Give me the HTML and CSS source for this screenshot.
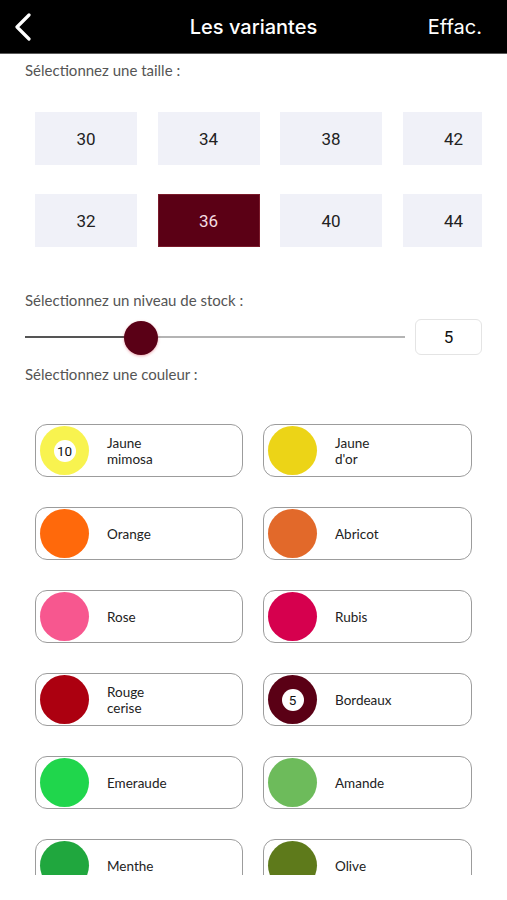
FILE: index.html
```html
<!DOCTYPE html>
<html lang="fr">
<head>
<meta charset="utf-8">
<title>Les variantes</title>
<link rel="stylesheet" href="styles.css">
</head>
<body>
<header class="topbar">
  <button class="back" aria-label="Retour">
    <svg width="20" height="28" viewBox="0 0 20 28"><polyline points="15,2 3,14 15,26" fill="none" stroke="#fff" stroke-width="3.2" stroke-linecap="round" stroke-linejoin="round"/></svg>
  </button>
  <h1 class="title">Les variantes</h1>
  <span class="clear">Effac.</span>
</header>
<main class="content">
  <p class="label label-size">Sélectionnez une taille :</p>
  <div class="sizes-wrap">
    <div class="sizes">
      <div class="size">30</div>
      <div class="size">34</div>
      <div class="size">38</div>
      <div class="size">42</div>
      <div class="size">32</div>
      <div class="size size-on">36</div>
      <div class="size">40</div>
      <div class="size">44</div>
    </div>
  </div>
  <p class="label label-stock">Sélectionnez un niveau de stock :</p>
  <div class="slider-row">
    <div class="slider">
      <div class="track-fill" style="width:116px"></div>
      <div class="thumb" style="left:99px"></div>
    </div>
    <div class="stock-input">5</div>
  </div>
  <p class="label label-color">Sélectionnez une couleur :</p>
  <div class="colors-wrap">
    <div class="colors">
      <div class="color"><span class="dot ring" style="background:#f8f34f"><span class="badge">10</span></span><span class="name">Jaune<br>mimosa</span></div>
      <div class="color"><span class="dot" style="background:#ecd417"></span><span class="name">Jaune<br>d'or</span></div>
      <div class="color"><span class="dot" style="background:#ff690b"></span><span class="name">Orange</span></div>
      <div class="color"><span class="dot" style="background:#e2692a"></span><span class="name">Abricot</span></div>
      <div class="color"><span class="dot" style="background:#f7578f"></span><span class="name">Rose</span></div>
      <div class="color"><span class="dot" style="background:#d6004e"></span><span class="name">Rubis</span></div>
      <div class="color"><span class="dot" style="background:#ac0010"></span><span class="name">Rouge<br>cerise</span></div>
      <div class="color"><span class="dot ring" style="background:#5a0015"><span class="badge">5</span></span><span class="name">Bordeaux</span></div>
      <div class="color"><span class="dot" style="background:#20d64c"></span><span class="name">Emeraude</span></div>
      <div class="color"><span class="dot" style="background:#6dbb5b"></span><span class="name">Amande</span></div>
      <div class="color"><span class="dot" style="background:#20a73e"></span><span class="name">Menthe</span></div>
      <div class="color"><span class="dot" style="background:#5e7a1b"></span><span class="name">Olive</span></div>
    </div>
  </div>
</main>
</body>
</html>
```
FILE: styles.css
```css
* { box-sizing: border-box; }
html, body { margin: 0; padding: 0; background: #fff; }
body { font-family: Lato, "Open Sans", sans-serif; color: #222; width: 507px; }

.topbar {
  height: 54px;
  background: #000;
  border-bottom: 1px solid #5a5a5a;
  display: flex;
  align-items: center;
  justify-content: space-between;
  padding: 0 25px 0 14px;
  position: relative;
}
.back { background: none; border: 0; padding: 0; margin-top: 1px; display: flex; }
.title {
  position: absolute;
  left: 0; right: 0;
  text-align: center;
  margin: 0;
  font-family: Inter, "Open Sans", sans-serif;
  font-weight: 500;
  font-size: 20px;
  color: #fff;
  pointer-events: none;
}
.clear {
  font-family: Inter, "Open Sans", sans-serif;
  font-size: 20px;
  color: #fff;
}

.content { padding: 0; }
.label {
  margin: 0;
  padding-left: 25px;
  font-size: 15px;
  line-height: 18px;
  color: #555;
}
.label-size { padding-top: 7px; }
.label-stock { margin-top: 44px; }
.label-color { margin-top: 10px; }

.sizes-wrap {
  margin: 33px 0 0 35px;
  width: 447px;
  overflow: hidden;
}
.sizes {
  display: grid;
  grid-template-columns: repeat(4, 102px);
  column-gap: 20.5px;
  row-gap: 29px;
  width: 490px;
}
.size {
  height: 53px;
  background: #f0f1f8;
  display: flex;
  align-items: center;
  justify-content: center;
  font-family: Roboto, sans-serif;
  font-size: 17px;
  color: #222;
}
.size-on { background: #5b0015; color: #f4dde2; border: 1px solid #7a1a2a; }

.slider-row {
  margin-top: 10px;
  padding-left: 25px;
  display: flex;
  align-items: center;
  gap: 10px;
  height: 36px;
}
.slider {
  position: relative;
  width: 380px;
  height: 2px;
  background: #b4b4b4;
}
.track-fill { height: 2px; background: #555; }
.thumb {
  position: absolute;
  top: -15px;
  width: 34px;
  height: 34px;
  border-radius: 50%;
  background: #5a0016;
  box-shadow: 0 1px 3px rgba(200, 0, 30, 0.35);
}
.stock-input {
  width: 67px;
  height: 36px;
  border: 1px solid #e4e4e4;
  border-radius: 6px;
  display: flex;
  align-items: center;
  justify-content: center;
  font-family: Roboto, sans-serif;
  font-size: 17px;
  color: #111;
}

.colors-wrap {
  margin-top: 41px;
  height: 451px;
  overflow: hidden;
  padding-left: 35px;
}
.colors {
  display: grid;
  grid-template-columns: 208px 209px;
  column-gap: 20px;
  row-gap: 30px;
}
.color {
  height: 53px;
  border: 1px solid #9c9c9c;
  border-radius: 12px;
  display: flex;
  align-items: center;
  padding-left: 4px;
}
.dot {
  width: 49px;
  height: 49px;
  border-radius: 50%;
  flex: none;
  display: flex;
  align-items: center;
  justify-content: center;
}
.badge {
  width: 22px;
  height: 22px;
  border-radius: 50%;
  background: #fff;
  display: flex;
  align-items: center;
  justify-content: center;
  font-family: Roboto, sans-serif;
  font-size: 13.5px;
  color: #111;
}
.name {
  margin-left: 18px;
  font-size: 13.5px;
  line-height: 16px;
  color: #222;
}
```
